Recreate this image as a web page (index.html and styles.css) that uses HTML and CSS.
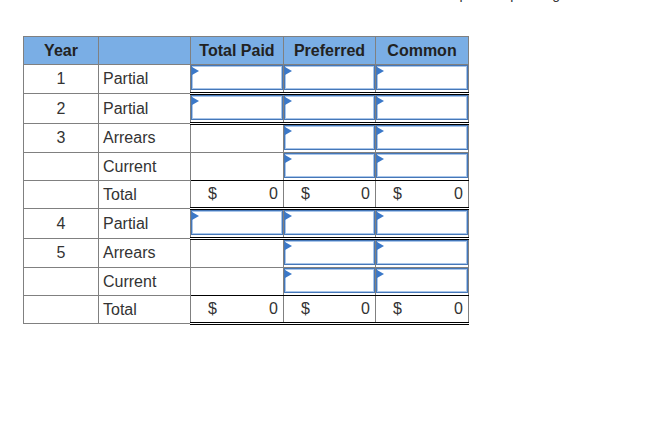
FILE: index.html
```html
<!DOCTYPE html>
<html>
<head>
<meta charset="utf-8">
<link rel="stylesheet" href="styles.css">
</head>
<body>
<div class="page">
  <p class="intro">Enter amounts in percent pending</p>
  <table class="grid">
    <colgroup>
      <col class="c-year"><col class="c-label"><col class="c-money"><col class="c-money2"><col class="c-money">
    </colgroup>
    <thead>
      <tr>
        <th>Year</th><th></th><th>Total Paid</th><th>Preferred</th><th>Common</th>
      </tr>
    </thead>
    <tbody>
      <tr class="dbl">
        <td class="yr">1</td><td class="lbl">Partial</td>
        <td class="in"><div class="box"></div></td><td class="in"><div class="box"></div></td><td class="in"><div class="box"></div></td>
      </tr>
      <tr class="dbl">
        <td class="yr">2</td><td class="lbl">Partial</td>
        <td class="in"><div class="box"></div></td><td class="in"><div class="box"></div></td><td class="in"><div class="box"></div></td>
      </tr>
      <tr>
        <td class="yr">3</td><td class="lbl">Arrears</td>
        <td class="m"></td><td class="in"><div class="box"></div></td><td class="in"><div class="box"></div></td>
      </tr>
      <tr class="pre-total">
        <td class="yr"></td><td class="lbl">Current</td>
        <td class="m"></td><td class="in"><div class="box"></div></td><td class="in"><div class="box"></div></td>
      </tr>
      <tr class="total">
        <td class="yr"></td><td class="lbl">Total</td>
        <td class="m"><div class="amt"><span>$</span><span>0</span></div></td>
        <td class="m"><div class="amt"><span>$</span><span>0</span></div></td>
        <td class="m"><div class="amt"><span>$</span><span>0</span></div></td>
      </tr>
      <tr class="dbl">
        <td class="yr">4</td><td class="lbl">Partial</td>
        <td class="in"><div class="box"></div></td><td class="in"><div class="box"></div></td><td class="in"><div class="box"></div></td>
      </tr>
      <tr>
        <td class="yr">5</td><td class="lbl">Arrears</td>
        <td class="m"></td><td class="in"><div class="box"></div></td><td class="in"><div class="box"></div></td>
      </tr>
      <tr class="pre-total">
        <td class="yr"></td><td class="lbl">Current</td>
        <td class="m"></td><td class="in"><div class="box"></div></td><td class="in"><div class="box"></div></td>
      </tr>
      <tr class="total">
        <td class="yr"></td><td class="lbl">Total</td>
        <td class="m"><div class="amt"><span>$</span><span>0</span></div></td>
        <td class="m"><div class="amt"><span>$</span><span>0</span></div></td>
        <td class="m"><div class="amt"><span>$</span><span>0</span></div></td>
      </tr>
    </tbody>
  </table>
</div>
</body>
</html>
```

FILE: styles.css
```css
html, body {
  margin: 0;
  padding: 0;
  background: #fff;
}

.page {
  padding-left: 23px;
  font-family: "Liberation Sans", Arial, sans-serif;
  color: #333;
}

.intro {
  margin: -14px 0 0 0;
  height: 16px;
  line-height: 16px;
  font-size: 14px;
  text-align: right;
  padding-right: 89px;
  white-space: nowrap;
  color: #333;
}

.grid {
  margin-top: 34px;
  border-collapse: collapse;
  table-layout: fixed;
  width: 446px;
  font-size: 16px;
}

.c-year { width: 75px; }
.c-label { width: 92px; }
.c-money { width: 93px; }
.c-money2 { width: 92px; }

.grid th,
.grid td {
  border: 1px solid #808080;
  padding: 0;
}

.grid th {
  background: #7aaee5;
  height: 27px;
  font-weight: bold;
  color: #222;
  text-align: center;
  line-height: 18px;
}

.grid td {
  height: 27px;
  line-height: 18px;
}

.grid .total td {
  height: 26px;
}

.yr {
  text-align: center;
}

.lbl {
  padding-left: 4px !important;
  text-align: left;
}

.dbl .in,
.dbl .m {
  border-bottom: 3px double #000;
}

.pre-total .in,
.pre-total .m {
  border-bottom: 1px solid #000;
}

.total .m {
  border-top: 1px solid #000;
  border-bottom: 3px double #000;
}

.in {
  vertical-align: top;
}

.box {
  position: relative;
  height: 23px;
  border: 1px solid #4577b8;
  box-shadow: inset 0 0 0 1px #a9c6ea;
  background: #fff;
}

.box::before {
  content: "";
  position: absolute;
  left: 0;
  top: 1px;
  border-style: solid;
  border-width: 4px 0 4px 7px;
  border-color: transparent transparent transparent #3b78c8;
}

.amt {
  display: flex;
  justify-content: space-between;
  padding: 0 5px 0 17px;
}
```
